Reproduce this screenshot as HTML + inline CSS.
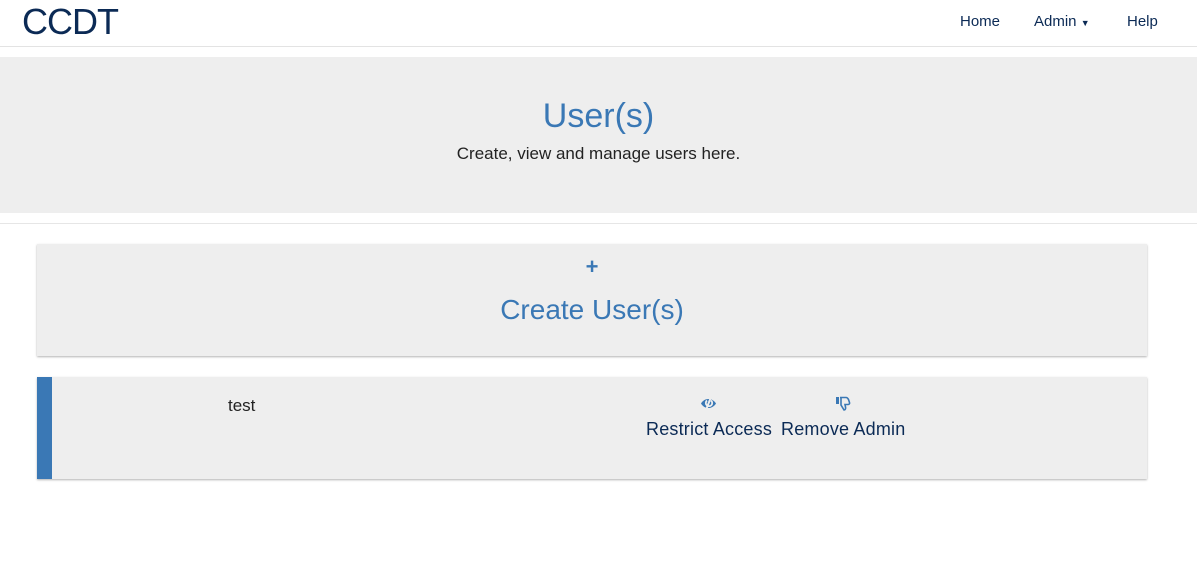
<!DOCTYPE html>
<html><head><style>
*{margin:0;padding:0;box-sizing:border-box}
body{width:1197px;height:570px;background:#fff;font-family:"Liberation Sans",sans-serif;position:relative;overflow:hidden;color:#222}
.nav{position:absolute;left:0;top:0;width:1197px;height:47px;border-bottom:1px solid #e3e3e3}
.logo{position:absolute;left:22px;top:1px;font-size:36px;color:#0b2a55;letter-spacing:-1px}
.nl{position:absolute;top:13px;font-size:15px;color:#0b2a55}
.jumbo{position:absolute;left:0;top:57px;width:1197px;height:156px;background:#eee;text-align:center}
.jumbo h1{font-weight:normal;font-size:34px;color:#3a78b5;margin-top:40px}
.jumbo p{font-size:17px;color:#222;margin-top:8px}
.hr{position:absolute;left:0;top:223px;width:1197px;border-top:1px solid #e6e6e6}
.card{position:absolute;left:37px;width:1110px;background:#eee;box-shadow:0 1px 2px rgba(0,0,0,.3)}
</style></head><body>
<div class="nav">
<div class="logo">CCDT</div>
<div class="nl" style="left:960px">Home</div>
<div class="nl" style="left:1034px">Admin <span style="font-size:9px">▼</span></div>
<div class="nl" style="left:1127px">Help</div>
</div>
<div class="jumbo"><h1>User(s)</h1><p>Create, view and manage users here.</p></div>
<div class="hr"></div>
<div class="card" style="top:244px;height:112px;text-align:center;color:#3a78b5">
<div style="font-size:22px;font-weight:bold;margin-top:10px">+</div>
<div style="font-size:28px;margin-top:14px">Create User(s)</div>
</div>
<div class="card" style="top:377px;height:102px">
<div style="position:absolute;left:0;top:0;width:15px;height:102px;background:#3a78b5"></div>
<div style="position:absolute;left:191px;top:19px;font-size:17px">test</div>
<svg style="position:absolute;left:663px;top:19px" width="18" height="15" viewBox="0 0 18 15"><path d="M1 7.5C4 2 12 1 16 7.5C12 14 4 13 1 7.5Z" fill="#3a78b5"/><path d="M7 4.5a3.2 3.2 0 1 0 4 0" stroke="#eee" stroke-width="1.8" fill="none"/><path d="M11 1L6 14" stroke="#eee" stroke-width="2"/></svg>
<svg style="position:absolute;left:798px;top:19px" width="16" height="16" viewBox="0 0 16 16"><rect x="1" y="1" width="3" height="7" fill="#3a78b5"/><path d="M5 1.5h6c1.5 0 2 1 2.5 2l1 3c.3 1-.3 2-1.3 2H10l.6 3c.2 1.3-.4 2.5-1.6 2.5L6 9V1.5Z" fill="none" stroke="#3a78b5" stroke-width="1.6"/></svg>
<div style="position:absolute;left:609px;top:42px;font-size:18px;color:#0b2a55;letter-spacing:0.2px">Restrict Access</div>
<div style="position:absolute;left:744px;top:42px;font-size:18px;color:#0b2a55;letter-spacing:0.2px">Remove Admin</div>
</div>
</body></html>
